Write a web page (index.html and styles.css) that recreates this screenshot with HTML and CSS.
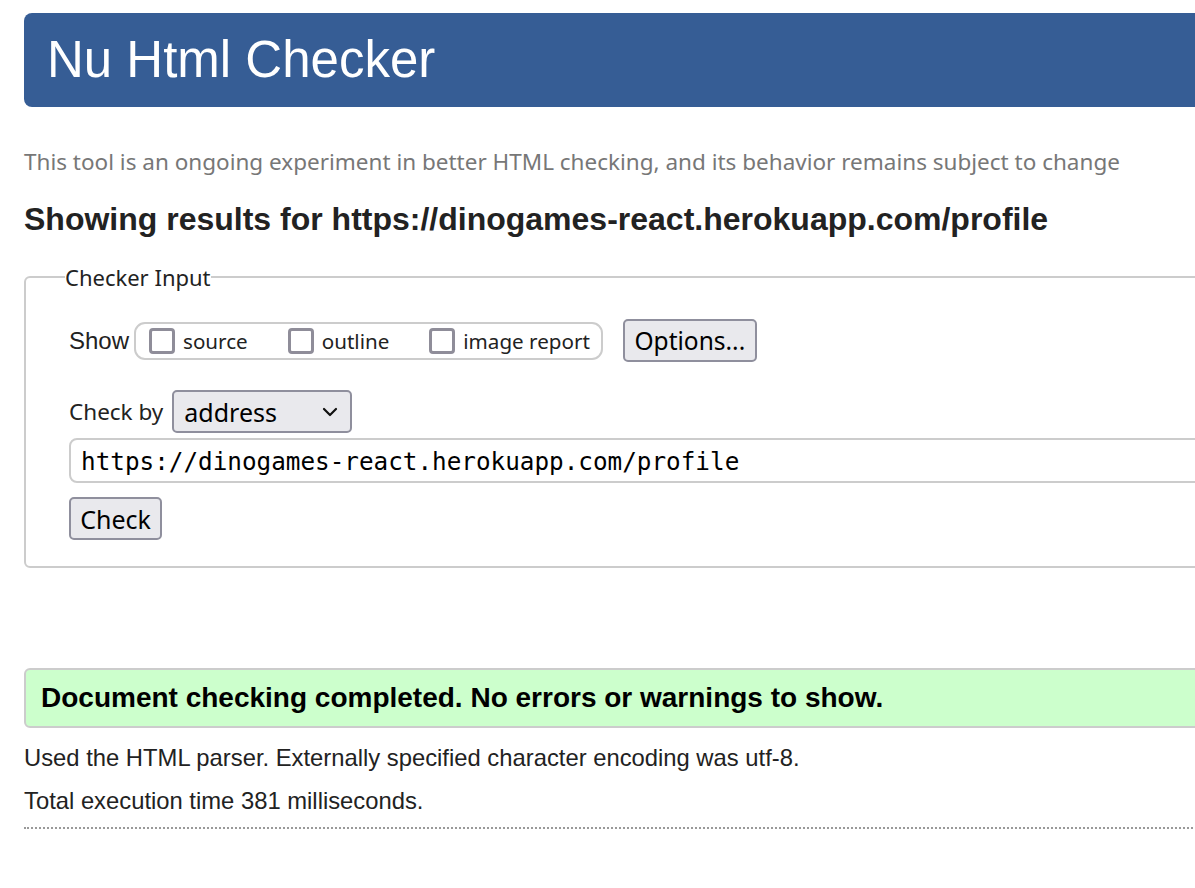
FILE: index.html
```html
<!DOCTYPE html>
<html lang="en">
<head>
<meta charset="utf-8">
<title>Nu Html Checker</title>
<link rel="stylesheet" href="styles.css">
</head>
<body>
<div class="page">
  <header class="banner"><h1 class="title">Nu Html Checker</h1></header>
  <p class="intro">This tool is an ongoing experiment in better HTML checking, and its behavior remains subject to change</p>
  <h2 class="results-for">Showing results for https://dinogames-react.herokuapp.com/profile</h2>
  <form class="checker">
    <fieldset class="input-set">
      <legend class="legend">Checker Input</legend>
      <div class="row show-row">
        <span class="show-label">Show</span>
        <div class="show-group">
          <label class="opt"><span class="box"></span><span class="opt-text">source</span></label>
          <label class="opt"><span class="box"></span><span class="opt-text">outline</span></label>
          <label class="opt"><span class="box"></span><span class="opt-text">image report</span></label>
        </div>
        <span class="btn options">Options...</span>
      </div>
      <div class="row by-row">
        <span class="by-label">Check by</span>
        <span class="select"><span class="select-text">address</span><svg class="chev" width="16" height="10" viewBox="0 0 16 10"><polyline points="2,2 8,8 14,2" fill="none" stroke="#111" stroke-width="2.2" stroke-linecap="round" stroke-linejoin="round"/></svg></span>
      </div>
      <div class="url-input">https://dinogames-react.herokuapp.com/profile</div>
      <div class="row check-row"><span class="btn check">Check</span></div>
    </fieldset>
  </form>
  <div class="success">Document checking completed. No errors or warnings to show.</div>
  <p class="info">Used the HTML parser. Externally specified character encoding was utf-8.</p>
  <p class="info">Total execution time 381 milliseconds.</p>
  <hr class="rule">
</div>
</body>
</html>
```
FILE: styles.css
```css
html, body {
  margin: 0;
  padding: 0;
  overflow: hidden;
  background: #fff;
}
body {
  font-family: "Liberation Sans", Arial, sans-serif;
  color: #222;
  width: 1195px;
  height: 888px;
}
.page {
  padding: 13px 0 0 24px;
  width: 1300px;
}
.banner {
  background: #365d95;
  border-radius: 8px;
  height: 94px;
}
.title {
  margin: 0;
  padding-left: 23px;
  font-weight: normal;
  font-size: 51px;
  line-height: 94px;
  color: #fff;
}
.intro {
  margin: 40px 0 0 0;
  font-family: "Noto Sans", "Open Sans", sans-serif;
  font-size: 22.5px;
  line-height: 30px;
  color: #777;
}
.results-for {
  margin: 24px 0 0 0;
  font-size: 32px;
  line-height: 36px;
  font-weight: bold;
  color: #222;
}
.checker { margin: 0; }
.input-set {
  margin: 25px 0 0 0;
  border: 2px solid #ccc;
  border-radius: 6px;
  padding: 27px 0 26px 43px;
}
.legend {
  font-family: "Noto Sans", "Open Sans", sans-serif;
  font-size: 22px;
  line-height: 30px;
  color: #222;
  padding: 0;
  margin-left: -4px;
}
.row {
  display: flex;
  align-items: center;
}
.show-label {
  font-size: 24px;
  margin-right: 5px;
}
.show-group {
  display: flex;
  align-items: center;
  height: 34px;
  border: 2px solid #ccc;
  border-radius: 11px;
  padding: 0 11px 0 13px;
  gap: 40px;
}
.opt {
  display: flex;
  align-items: center;
  gap: 8px;
}
.box {
  width: 20px;
  height: 20px;
  border: 3px solid #8f8d99;
  border-radius: 4px;
}
.opt-text {
  font-family: "Noto Sans", "Open Sans", sans-serif;
  font-size: 20.6px;
  color: #222;
}
.btn {
  display: inline-flex;
  align-items: center;
  justify-content: center;
  background: #e9e9ed;
  border: 2px solid #8f8f9d;
  border-radius: 5px;
  font-family: "Noto Sans", "Open Sans", sans-serif;
  font-size: 24.5px;
  color: #000;
  box-sizing: border-box;
  height: 43px;
}
.options {
  margin-left: 20px;
  width: 134px;
}
.by-row { margin-top: 28px; }
.by-label {
  font-family: "Noto Sans", "Open Sans", sans-serif;
  font-size: 22.5px;
  margin-right: 9px;
}
.select {
  display: inline-flex;
  align-items: center;
  justify-content: space-between;
  box-sizing: border-box;
  width: 180px;
  height: 43px;
  padding: 0 12px 0 10px;
  background: #e9e9ed;
  border: 2px solid #8f8f9d;
  border-radius: 5px;
  font-family: "Noto Sans", "Open Sans", sans-serif;
  font-size: 25px;
  color: #000;
}
.url-input {
  margin-top: 5px;
  box-sizing: border-box;
  height: 45px;
  border: 2px solid #ccc;
  border-radius: 8px;
  padding: 0 10px;
  font-family: "DejaVu Sans Mono", "Liberation Mono", monospace;
  font-size: 24.3px;
  line-height: 43px;
  color: #000;
}
.check-row { margin-top: 14px; }
.check { width: 93px; font-size: 25px; }
.success {
  margin-top: 100px;
  box-sizing: border-box;
  height: 60px;
  background: #ccffcc;
  border: 2px solid #ccc;
  border-radius: 6px;
  padding-left: 15px;
  font-size: 28px;
  font-weight: bold;
  line-height: 56px;
  color: #000;
}
.info {
  margin: 0;
  font-size: 23.8px;
  line-height: 43px;
  color: #222;
}
.success + .info { margin-top: 8px; }
.rule {
  margin: 5px 0 0 0;
  border: 0;
  border-top: 2px dotted #999;
  height: 0;
}
```
